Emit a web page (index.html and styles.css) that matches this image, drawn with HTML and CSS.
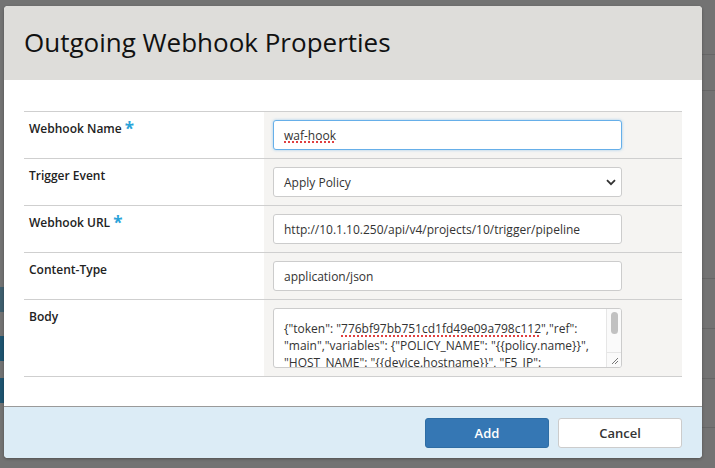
FILE: index.html
```html
<!DOCTYPE html>
<html>
<head>
<meta charset="utf-8">
<link rel="stylesheet" href="styles.css">
</head>
<body>
<div class="backdrop">
  <div class="edge-left">
    <span class="blk b1"></span>
    <span class="blk b2"></span>
    <span class="blk b3"></span>
  </div>
  <div class="modal">
    <div class="modal-header">
      <h1 class="title">Outgoing Webhook Properties</h1>
    </div>
    <div class="modal-body">
      <div class="form">
        <div class="row">
          <div class="label">Webhook Name <span class="req">*</span></div>
          <div class="value"><div class="input focused"><span class="spell">waf-hook</span></div></div>
        </div>
        <div class="row">
          <div class="label">Trigger Event</div>
          <div class="value">
            <div class="input select">
              <span>Apply Policy</span>
              <svg class="chev" width="10" height="7" viewBox="0 0 10 7"><path d="M1 1.2 L5 5.2 L9 1.2" fill="none" stroke="#333" stroke-width="1.8"/></svg>
            </div>
          </div>
        </div>
        <div class="row">
          <div class="label">Webhook URL <span class="req">*</span></div>
          <div class="value"><div class="input">http://10.1.10.250/api/v4/projects/10/trigger/pipeline</div></div>
        </div>
        <div class="row">
          <div class="label">Content-Type</div>
          <div class="value"><div class="input">application/json</div></div>
        </div>
        <div class="row body-row">
          <div class="label">Body</div>
          <div class="value">
            <div class="textarea">
              <div class="ta-text">{"token": "<span class="spell">776bf97bb751cd1fd49e09a798c112</span>","ref": "main","variables": {"POLICY_NAME": <span class="nw">"{{policy.name}}",</span> "HOST_NAME": <span class="nw">"{{device.hostname}}",</span> "F5_IP": <span class="nw">"{{device.ip}}"}}</span></div>
              <div class="scroll">
                <span class="thumb"></span>
                <span class="grip">
                  <svg width="9" height="9" viewBox="0 0 9 9"><path d="M8 2 L2 8 M8 5 L5 8" stroke="#777" stroke-width="1"/></svg>
                </span>
              </div>
            </div>
          </div>
        </div>
      </div>
    </div>
    <div class="modal-footer">
      <button class="btn primary">Add</button>
      <button class="btn">Cancel</button>
    </div>
  </div>
</div>
</body>
</html>
```

FILE: styles.css
```css
* { box-sizing: border-box; }
html, body { margin: 0; padding: 0; }
body {
  width: 715px;
  height: 468px;
  overflow: hidden;
  font-family: "Open Sans", "Noto Sans", sans-serif;
  background-color: #737373;
  background-image:
    linear-gradient(#666, #666),
    linear-gradient(#666, #666),
    linear-gradient(#666, #666),
    linear-gradient(#666, #666),
    linear-gradient(#666, #666),
    linear-gradient(#666, #666);
  background-repeat: no-repeat;
  background-size: 20px 1px;
  background-position: 700px 54px, 700px 90px, 700px 278px, 700px 328px, 700px 378px, 700px 427px;
}
.backdrop {
  display: flex;
  align-items: flex-start;
  height: 468px;
}
.edge-left {
  width: 4px;
  flex: none;
  display: flex;
  flex-direction: column;
}
.blk { display: block; width: 4px; background: #2f5566; }
.b1 { margin-top: 287px; height: 25px; background: #3f5f6e; }
.b2 { margin-top: 24px; height: 25px; background: #1f5470; }
.b3 { margin-top: 17px; height: 25px; background: #1f5470; }

.modal {
  width: 698px;
  margin-top: 6px;
  border-radius: 4px;
  overflow: hidden;
  background: #fff;
  box-shadow: 0 1px 3px rgba(0,0,0,0.3);
}
.modal-header {
  height: 74px;
  background: #deddda;
  padding: 0 0 0 20px;
  display: flex;
  align-items: center;
}
.title {
  margin: 0;
  font-size: 26px;
  font-weight: 400;
  color: #111;
  letter-spacing: 0;
  line-height: 1;
  padding-bottom: 2px;
}
.modal-body {
  padding: 31px 20px 29px 20px;
}
.form {
  border-top: 1px solid #cfcfcf;
}
.row {
  display: flex;
  border-bottom: 1px solid #cfcfcf;
  height: 47px;
}
.body-row { height: 77px; }
.label {
  width: 240px;
  flex: none;
  padding: 8px 0 0 5px;
  font-size: 12px;
  font-weight: 600;
  color: #222;
}
.req {
  color: #2aa3d9;
  font-size: 17px;
  font-weight: 700;
  line-height: 10px;
  vertical-align: -2px;
}
.value {
  flex: 1;
  background: #f5f4f2;
  padding: 8px 0 0 9px;
}
.input {
  width: 349px;
  height: 30px;
  border: 1px solid #cccccc;
  border-radius: 3px;
  background: #fff;
  font-size: 12px;
  color: #333;
  padding: 0 0 0 10px;
  display: flex;
  align-items: center;
  white-space: nowrap;
}
.input.focused {
  border-color: #66afe9;
  box-shadow: 0 0 3px rgba(102,175,233,0.6);
}
.select { justify-content: space-between; padding-right: 5px; }
.chev { display: block; }
.spell {
  text-decoration: underline dotted #e04040;
  text-decoration-thickness: 1.5px;
  text-underline-offset: 2px;
}
.nw { white-space: nowrap; }
.textarea {
  width: 349px;
  height: 60px;
  border: 1px solid #cccccc;
  border-radius: 3px;
  background: #fff;
  display: flex;
  overflow: hidden;
}
.ta-text {
  flex: 1;
  font-size: 12px;
  line-height: 17px;
  color: #333;
  padding: 11px 4px 0 10px;
  overflow: hidden;
}
.scroll {
  width: 15px;
  flex: none;
  border-left: 1px solid #e6e6e6;
  background: #fafafa;
  display: flex;
  flex-direction: column;
  align-items: center;
  justify-content: space-between;
}
.thumb {
  display: block;
  width: 7px;
  height: 22px;
  margin-top: 3px;
  border-radius: 4px;
  background: #c1c1c1;
}
.grip {
  width: 15px;
  height: 15px;
  border-top: 1px solid #e6e6e6;
  display: flex;
  align-items: center;
  justify-content: center;
}
.grip svg { display: block; }
.modal-footer {
  height: 52px;
  background: #dcecf6;
  border-top: 1px solid #9a9a9a;
  display: flex;
  justify-content: flex-end;
  align-items: center;
  gap: 9px;
  padding: 0 20px 0 0;
}
.btn {
  width: 124px;
  height: 30px;
  border-radius: 3px;
  border: 1px solid #cccccc;
  background: #fff;
  font-family: "Open Sans", "Noto Sans", sans-serif;
  font-size: 13px;
  font-weight: 600;
  color: #333;
  padding: 0;
}
.btn.primary {
  background: #3577b4;
  border-color: #2e6da4;
  color: #fff;
}
```
